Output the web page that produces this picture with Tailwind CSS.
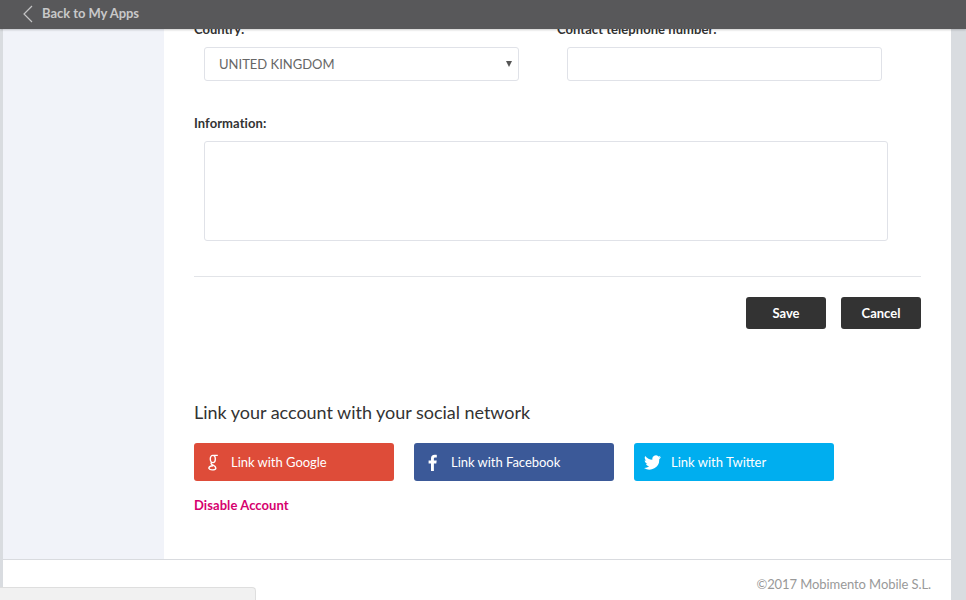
<!DOCTYPE html>
<html lang="en">
<head>
    <meta charset="utf-8" />
    <title>Account</title>
    <script src="https://cdn.jsdelivr.net/npm/@tailwindcss/browser@4"></script>
</head>
<body class="bg-[#d9dce0] font-['Lato',sans-serif] overflow-hidden">
    <div class="relative h-[600px] w-[966px] overflow-hidden pl-[3px] pr-[15px]">
        <!-- Top bar -->
        <div class="absolute left-0 top-0 z-10 flex h-[29px] w-full items-center bg-[#58585a] pb-[2px] pl-[22px] shadow-[0_1px_2px_rgba(0,0,0,0.2)]">
            <svg class="mr-[9px]" width="11" height="18" viewBox="0 0 11 18" fill="none" stroke="#c4c4c5" stroke-width="1.2"><path d="M10 1 2 9l8 8" /></svg>
            <span class="text-[13px] font-bold tracking-[-0.05px] text-[#c8c8c9]">Back to My Apps</span>
        </div>

        <div class="flex h-[559px] bg-white">
            <!-- Sidebar -->
            <div class="w-[161px] shrink-0 bg-[#f1f3f9]"></div>
            <!-- Main -->
            <div class="w-[787px] pl-[30px] pr-[30px] pt-[20px]">
                <div class="flex">
                    <div class="w-[363px]">
                        <label class="block h-[18px] text-[13px] font-bold leading-[18px] text-[#333]">Country:</label>
                        <div class="relative ml-[10px] mt-[9px] flex h-[34px] w-[315px] items-center rounded-[3px] border border-[#e0e2e8] bg-white pl-[14px] pt-[1px] text-[13px] text-[#666]">
                            UNITED KINGDOM
                            <svg class="absolute right-[6px] top-[13px]" width="6" height="6" viewBox="0 0 6 6" fill="#555"><path d="M0 0h6L3 6z" /></svg>
                        </div>
                    </div>
                    <div>
                        <label class="block h-[18px] text-[13px] font-bold leading-[18px] tracking-[0.05px] text-[#333]">Contact telephone number:</label>
                        <input class="ml-[10px] mt-[9px] block h-[34px] w-[315px] rounded-[3px] border border-[#e0e2e8] bg-white" type="text" />
                    </div>
                </div>

                <label class="mt-[33px] block h-[18px] text-[13px] font-bold leading-[18px] tracking-[0.07px] text-[#333]">Information:</label>
                <textarea class="ml-[10px] mt-[9px] block h-[100px] w-[684px] resize-none rounded-[3px] border border-[#e0e2e8] bg-white"></textarea>

                <div class="mt-[35px] border-t border-[#e2e4e8]"></div>

                <div class="mt-[20px] flex justify-end gap-[15px]">
                    <button class="h-[32px] w-[80px] rounded-[3px] bg-[#333333] pt-[1px] text-[13px] font-bold text-white">Save</button>
                    <button class="h-[32px] w-[80px] rounded-[3px] bg-[#333333] pt-[1px] text-[13px] font-bold text-white">Cancel</button>
                </div>

                <h2 class="mt-[71px] text-[18px] leading-[24px] tracking-[-0.03px] text-[#333]">Link your account with your social network</h2>

                <div class="mt-[19px] flex gap-[20px]">
                    <a class="flex h-[38px] w-[200px] items-center rounded-[3px] bg-[#de4c39] pt-[1px] text-[13px] tracking-[-0.03px] text-white" href="#">
                        <span class="flex w-[37px] justify-center">
                            <svg width="10" height="18" viewBox="0 0 10 18" fill="none" stroke="#fff" stroke-width="1.4"><ellipse cx="4.800" cy="5" rx="2.500" ry="3.600" /><path d="M9.800 1.400H5.500M3.800 8.400c-1.200.9-.8 1.700.5 2.400 2.400 1.200 3.800 1.800 3.500 3.500-.4 2-6 2.200-6.800.3-.6-1.500 1.200-2.800 4-2.900" /></svg>
                        </span>Link with Google
                    </a>
                    <a class="flex h-[38px] w-[200px] items-center rounded-[3px] bg-[#3b5998] pt-[1px] text-[13px] tracking-[-0.03px] text-white" href="#">
                        <span class="flex w-[37px] justify-center">
                            <svg width="10" height="17" viewBox="0 0 10 17" fill="#fff"><path d="M3 17V9.500H.6V6.600H3V4.500C3 2 4.400.8 6.600.8c1 0 1.900.1 2.200.1v2.600H7.300c-1.200 0-1.400.6-1.400 1.400v1.700h2.800l-.4 2.900H5.900V17z" /></svg>
                        </span>Link with Facebook
                    </a>
                    <a class="flex h-[38px] w-[200px] items-center rounded-[3px] bg-[#00aeef] pt-[1px] text-[13px] text-white" href="#">
                        <span class="flex w-[37px] justify-center">
                            <svg width="17" height="15" viewBox="0 0 24 20" fill="#fff"><path d="M24 2.400c-.9.4-1.800.7-2.800.8 1-.6 1.800-1.600 2.200-2.700-1 .6-2 1-3.100 1.200A4.900 4.900 0 0 0 11.900 6.200C7.800 6 4.200 4.100 1.700.9.400 3.200 1 6.100 3.200 7.500c-.8 0-1.600-.2-2.200-.6 0 2.300 1.600 4.400 3.900 4.900-.7.2-1.500.2-2.200.1.600 2 2.400 3.400 4.600 3.400A9.900 9.900 0 0 1 0 17.800 13.900 13.900 0 0 0 21.500 5.400c1-.7 1.900-1.700 2.500-3z" /></svg>
                        </span>Link with Twitter
                    </a>
                </div>

                <a class="mt-[15px] block text-[13px] font-bold leading-[18px] tracking-[0.07px] text-[#d6006e]" href="#">Disable Account</a>
            </div>
        </div>

        <!-- Footer -->
        <div class="h-[41px] border-t border-[#d9dbdf] bg-white pr-[20px] pt-[15px] text-right text-[13px] leading-[18px] tracking-[-0.08px] text-[#999]">©2017 Mobimento Mobile S.L.</div>

        <!-- Bottom left panel -->
        <div class="absolute bottom-0 left-0 h-[13px] w-[256px] rounded-tr-[4px] border-r border-t border-[#dedede] bg-[#f1f1f1]"></div>
    </div>
</body>
</html>
